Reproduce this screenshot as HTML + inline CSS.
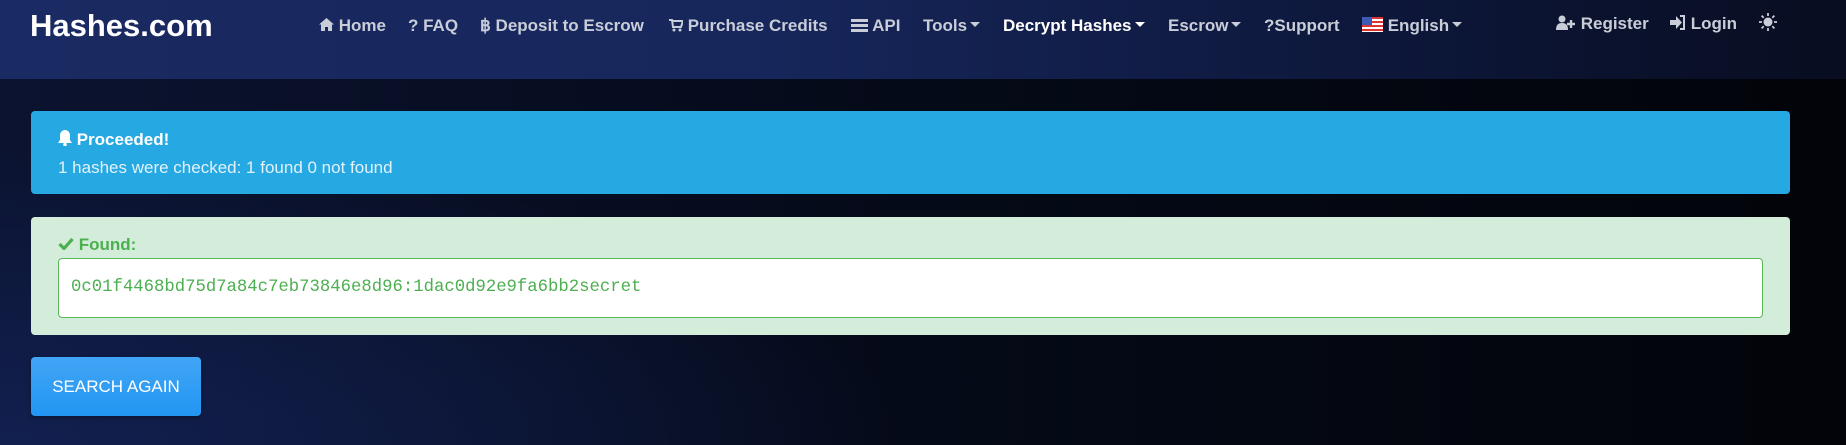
<!DOCTYPE html>
<html><head><meta charset="utf-8"><style>
*{margin:0;padding:0;box-sizing:border-box}
body{width:1846px;height:445px;overflow:hidden;font-family:"Liberation Sans",sans-serif;background:radial-gradient(ellipse 900px 300px at 0% 100%,#122050 0%,rgba(5,10,24,0) 100%),linear-gradient(90deg,#0b1330 0%,#050a18 50%,#020409 100%);position:relative}
.nav{position:absolute;left:0;top:0;width:1846px;height:79px;background:linear-gradient(90deg,#1a2a62 0%,#17275c 40%,#0d173a 75%,#080d20 100%)}
.logo{position:absolute;left:30px;top:8px;font-size:31px;font-weight:bold;color:#fff}
.n{position:absolute;top:16px;font-size:17px;font-weight:bold;color:#c9cdd8;white-space:nowrap}
.n.w{color:#fff}
.car{display:inline-block;width:0;height:0;border-left:5px solid transparent;border-right:5px solid transparent;border-top:5px solid currentColor;vertical-align:4px;margin-left:3px}
.alert{position:absolute;left:31px;top:111px;width:1759px;height:83px;background:#26a9e3;border-radius:4px}
.found{position:absolute;left:31px;top:217px;width:1759px;height:118px;background:#d4edda;border-radius:4px}
.inp{position:absolute;left:27px;top:41px;width:1705px;height:60px;background:#fff;border:1px solid #5cb85c;border-radius:4px;font-family:"Liberation Mono",monospace;font-size:17.3px;color:#4caf50;padding:19px 0 0 12px}
.btn{position:absolute;left:31px;top:357px;width:170px;height:59px;background:linear-gradient(#42a5f5,#2196f3);border-radius:4px;color:#fff;font-size:17px;text-align:center;line-height:60px;box-shadow:0 2px 4px rgba(0,0,0,.3)}
</style></head><body>
<div class="nav">
<div class="logo">Hashes.com</div>
<div class="n" style="left:319px"><svg width="15" height="13" viewBox="0 0 15 13" style="vertical-align:0"><path d="M7.5 0L0 6.5h2V13h4V9h3v4h4V6.5h2z" fill="#c9cdd8"/></svg> Home</div>
<div class="n" style="left:408px">? FAQ</div>
<div class="n" style="left:480px">&#3647; Deposit to Escrow</div>
<div class="n" style="left:669px"><svg width="14" height="13" viewBox="0 0 14 13" style="vertical-align:-1px"><path d="M0 1h3l1 7h8l2-6H4" fill="none" stroke="#c9cdd8" stroke-width="2"/><circle cx="5" cy="11" r="1.5" fill="#c9cdd8"/><circle cx="11" cy="11" r="1.5" fill="#c9cdd8"/></svg> Purchase Credits</div>
<div class="n" style="left:851px"><svg width="17" height="13" viewBox="0 0 17 13" style="vertical-align:-1px"><rect x="0" y="0" width="17" height="3" fill="#c9cdd8"/><rect x="0" y="5" width="17" height="3" fill="#c9cdd8"/><rect x="0" y="10" width="17" height="3" fill="#c9cdd8"/></svg> API</div>
<div class="n" style="left:923px">Tools<span class="car"></span></div>
<div class="n w" style="left:1003px">Decrypt Hashes<span class="car"></span></div>
<div class="n" style="left:1168px">Escrow<span class="car"></span></div>
<div class="n" style="left:1264px">?Support</div>
<div class="n" style="left:1362px"><svg width="21" height="15" viewBox="0 0 21 15" style="vertical-align:-1px"><rect width="21" height="15" fill="#fff"/><rect y="0" width="21" height="2" fill="#d33"/><rect y="4" width="21" height="2" fill="#d33"/><rect y="8" width="21" height="2" fill="#d33"/><rect y="12" width="21" height="2" fill="#d33"/><rect width="10" height="8" fill="#3b5bb5"/></svg> English<span class="car"></span></div>
<div class="n" style="left:1556px;top:14px"><svg width="20" height="15" viewBox="0 0 20 15" style="vertical-align:-1px"><circle cx="6" cy="4" r="3.5" fill="#c9cdd8"/><path d="M0 15c0-5 2-7 6-7s6 2 6 7z" fill="#c9cdd8"/><path d="M15 5v8M11 9h8" stroke="#c9cdd8" stroke-width="2.4"/></svg> Register</div>
<div class="n" style="left:1670px;top:14px"><svg width="16" height="15" viewBox="0 0 16 15" style="vertical-align:-1px"><path d="M0 5h6V1l6 6.5-6 6.5v-4H0z" fill="#c9cdd8"/><path d="M10 1h4v13h-4" fill="none" stroke="#c9cdd8" stroke-width="2"/></svg> Login</div>
<div class="n" style="left:1759px;top:13px"><svg width="18" height="18" viewBox="0 0 18 18"><circle cx="9" cy="9" r="4.5" fill="#c9cdd8"/><path d="M9 0v3M9 15v3M0 9h3M15 9h3M2.6 2.6l2.1 2.1M13.3 13.3l2.1 2.1M2.6 15.4l2.1-2.1M13.3 4.7l2.1-2.1" stroke="#c9cdd8" stroke-width="1.8"/></svg></div>
</div>
<div class="alert">
<div style="position:absolute;left:27px;top:19px;font-size:17px;font-weight:bold;color:#fff"><svg width="14" height="16" viewBox="0 0 14 16" style="vertical-align:-1px"><path d="M7 0c-3 0-5 2.5-5 5.5V10L0 13h14l-2-3V5.5C12 2.5 10 0 7 0z" fill="#fff"/><circle cx="7" cy="14.5" r="1.8" fill="#fff"/></svg> Proceeded!</div>
<div style="position:absolute;left:27px;top:47px;font-size:17px;color:#e3f2fb">1 hashes were checked: 1 found 0 not found</div>
</div>
<div class="found">
<div style="position:absolute;left:27px;top:18px;font-size:17px;font-weight:bold;color:#4caf50"><svg width="16" height="13" viewBox="0 0 16 13" style="vertical-align:0"><path d="M1.5 7l4.5 4.5L14.5 2" fill="none" stroke="#4caf50" stroke-width="3.2"/></svg> Found:</div>
<div class="inp">0c01f4468bd75d7a84c7eb73846e8d96:1dac0d92e9fa6bb2secret</div>
</div>
<div class="btn">SEARCH AGAIN</div>
</body></html>
